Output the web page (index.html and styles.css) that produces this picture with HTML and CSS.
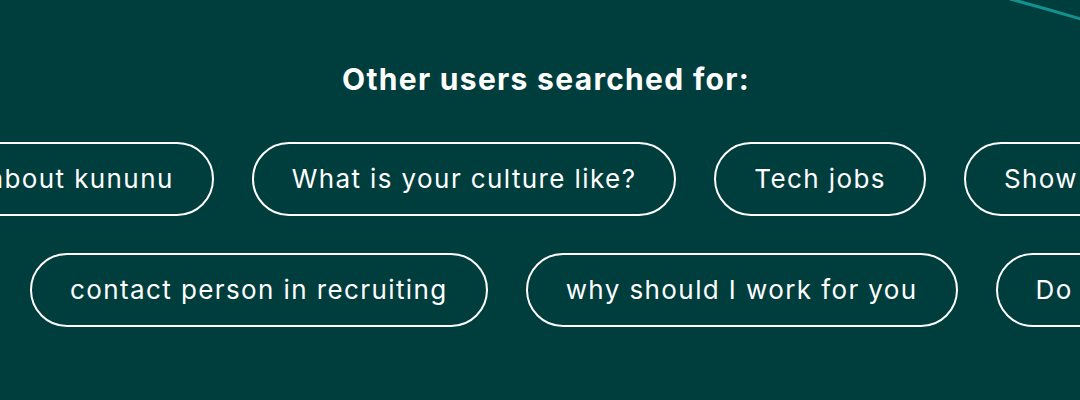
FILE: index.html
```html
<!DOCTYPE html>
<html lang="en">

<head>
    <meta charset="UTF-8">
    <meta name="viewport" content="width=device-width, initial-scale=1.0">
    <title>Other users searched for</title>
    <link rel="stylesheet" href="styles.css">
</head>

<body>

    <section class="searches">
        <!-- decorative arc in the corner -->
        <svg class="deco" width="120" height="40" viewBox="0 0 120 40">
            <path d="M50 -1 Q 88 9 124 20" fill="none" stroke="#12928e" stroke-width="3"/>
        </svg>

        <h2 class="title">Other users searched for:</h2>

        <div class="row row-one">
            <a class="pill" href="#">All about kununu</a>
            <a class="pill" href="#">What is your culture like?</a>
            <a class="pill" href="#">Tech jobs</a>
            <a class="pill" href="#">Show me open positions</a>
        </div>

        <div class="row row-two">
            <a class="pill" href="#">contact person in recruiting</a>
            <a class="pill" href="#">why should I work for you</a>
            <a class="pill" href="#">Do you offer home office?</a>
        </div>
    </section>

</body>

</html>
```

FILE: styles.css
```css
body {
    margin: 0;
    padding: 0;
    background-color: #003d3d;
    font-family: Inter, "Noto Sans", Arial, sans-serif;
    color: #ffffff;
    overflow: hidden;
}

.searches {
    position: relative;
    height: 400px;
    padding-top: 61px;
    box-sizing: border-box;
    overflow: hidden;
}

.deco {
    position: absolute;
    top: 0;
    right: 0;
}

.title {
    margin: 0 0 45px 0;
    text-align: center;
    font-size: 30px;
    font-weight: 700;
    line-height: 36px;
    letter-spacing: 1.3px;
    transform: translateX(6px);
}

.row {
    display: flex;
    gap: 38px;
    white-space: nowrap;
}

.row-one {
    margin-left: -95px;
    margin-bottom: 37px;
}

.row-two {
    margin-left: 30px;
}

.pill {
    flex: none;
    padding: 20px 38px;
    border: 2px solid #ffffff;
    border-radius: 40px;
    color: #ffffff;
    text-decoration: none;
    font-size: 26px;
    line-height: 30px;
    letter-spacing: 1.4px;
}
```
